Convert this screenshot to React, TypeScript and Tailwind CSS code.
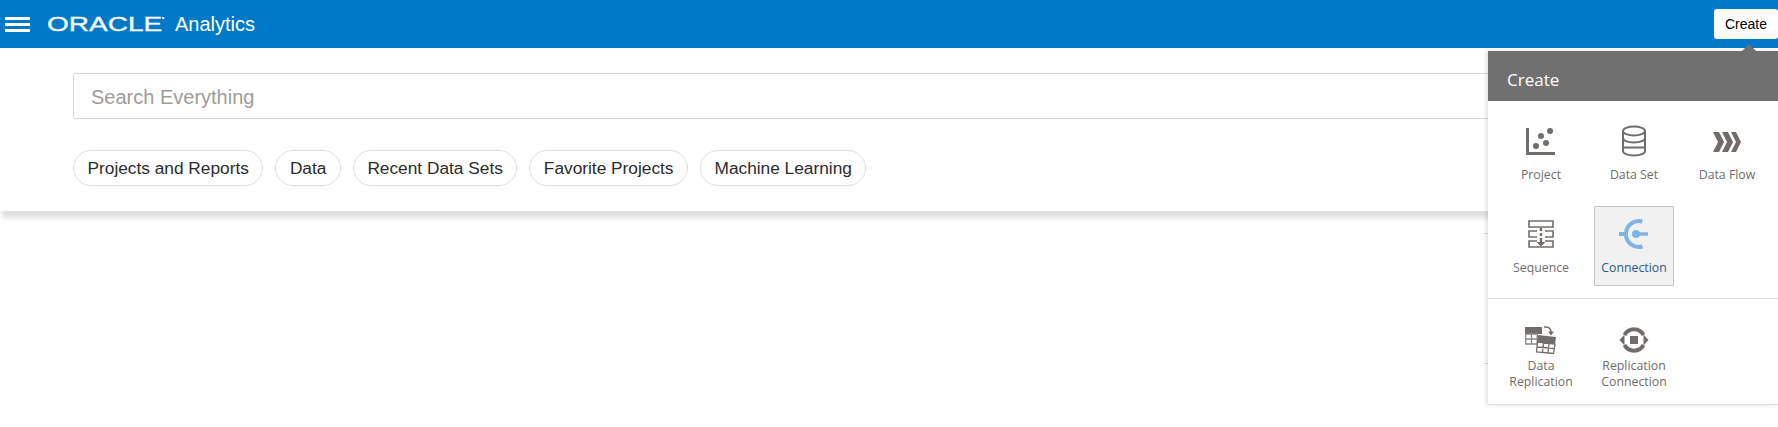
import type { ReactNode } from 'react';

const pills = ['Projects and Reports', 'Data', 'Recent Data Sets', 'Favorite Projects', 'Machine Learning'];

function ProjectIcon() {
  return (
    <svg className="w-8 h-8" viewBox="0 0 32 32" fill="#716d6b">
      <path d="M1 3h3v24h26v3H1z" />
      <circle cx="11" cy="21" r="3" />
      <circle cx="21" cy="18" r="3" />
      <circle cx="16" cy="11" r="3" />
      <circle cx="25" cy="6" r="3" />
    </svg>
  );
}

function DataSetIcon() {
  return (
    <svg className="w-8 h-8" viewBox="0 0 32 32" fill="none" stroke="#716d6b" strokeWidth="2">
      <ellipse cx="16" cy="6" rx="11" ry="4.500" />
      <path d="M5 6v20c0 2.500 4.500 4.500 11 4.500s11-2 11-4.500V6" />
      <path d="M5 13c0 2.500 4.500 4.500 11 4.500s11-2 11-4.500" />
      <path d="M5 22.500h22" />
    </svg>
  );
}

function DataFlowIcon() {
  return (
    <svg className="w-8 h-8" viewBox="0 0 32 32" fill="#716d6b">
      <path d="M2 7h6l5 10-5 10H2l5-10z" />
      <path d="M11 7h6l5 10-5 10h-6l5-10z" />
      <path d="M20 7h5l5 10-5 10h-5l5-10z" />
    </svg>
  );
}

function SequenceIcon() {
  return (
    <svg className="w-8 h-8" viewBox="0 0 32 32" fill="none" stroke="#716d6b" strokeWidth="1.600">
      <path d="M4 3h24v6H4z" />
      <path d="M12 13H4v6h8M20 13h8v6h-8" />
      <path d="M12 23H4v6h24v-6h-8" />
      <path d="M16 10v3M16 15v3M16 20v5" strokeWidth="2.400" />
      <path d="M11.500 24h9L16 28.500z" fill="#716d6b" stroke="none" />
    </svg>
  );
}

function ConnectionIcon() {
  return (
    <svg className="w-8 h-8" viewBox="0 0 32 32" fill="none" stroke="#7db4e3">
      <path d="M24.500 3.500A13 13 0 1 0 24.500 28.500" strokeWidth="4" />
      <path d="M1 16h5" strokeWidth="4" />
      <circle cx="18" cy="16" r="4" fill="#7db4e3" stroke="none" />
      <path d="M18 16h12" strokeWidth="3.400" />
    </svg>
  );
}

function DataReplicationIcon() {
  return (
    <svg className="w-8 h-8" viewBox="0 0 32 32">
      <path d="M0 3h17v7H0z" fill="#716d6b" />
      <path d="M.7 10h11.500v10H.7zM.7 15h11.500M6.500 10v10" fill="#fff" stroke="#8a8685" strokeWidth="1.300" />
      <path d="M19 3c4-.5 7 1 7 5" fill="none" stroke="#716d6b" strokeWidth="1.500" />
      <path d="M23 7.500h6L26 11.500z" fill="#716d6b" />
      <path d="M13 11l18 2-1 7-18-2z" fill="#716d6b" />
      <path d="M12.500 18l17.500 2-1.500 9.500-17-1.500zM12 23l17.500 1.500M18.500 18.500l-1 10M24 19.500l-1 9.500" fill="#fff" stroke="#716d6b" strokeWidth="1.300" />
    </svg>
  );
}

function ReplicationConnectionIcon() {
  return (
    <svg className="w-8 h-8" viewBox="0 0 32 32" fill="none" stroke="#716d6b">
      <path d="M6.500 11A10.800 10.800 0 0 1 25.500 11M25.500 21A10.800 10.800 0 0 1 6.500 21" strokeWidth="4" />
      <path d="M6.500 10.500L1.500 16l5 5.500zM25.500 10.500l5 5.500-5 5.500z" fill="#716d6b" stroke="none" />
      <rect x="12" y="12" width="8" height="8" fill="#716d6b" stroke="none" />
    </svg>
  );
}

function MenuItem({ icon, label, active, tight }: { icon: ReactNode; label: ReactNode; active?: boolean; tight?: boolean }) {
  return (
    <div
      className={`w-[80px] h-[80px] pt-[11px] flex flex-col items-center text-center border ${
        active ? 'bg-[#f1f1f1] border-[#c4c4c4] text-[#2c5a8e]' : 'border-transparent text-[#716d6b]'
      }`}
    >
      {icon}
      <div className={`text-[12.300px] leading-[16px] whitespace-nowrap ${tight ? 'mt-[2px]' : 'mt-[10px]'}`}>{label}</div>
    </div>
  );
}

export default function App() {
  return (
    <div className="relative w-full h-[427px] overflow-hidden bg-white font-['Liberation_Sans',Arial,sans-serif]">
      <header className="h-[48px] bg-[#007ac8] flex items-center justify-between text-white">
        <div className="flex items-center">
          <div className="ml-[5px] w-[25px] flex flex-col gap-[3px] pt-[1px]">
            <div className="h-[3px] bg-white" />
            <div className="h-[3px] bg-white" />
            <div className="h-[3px] bg-white" />
          </div>
          <div className="relative ml-[17px] w-[116px] text-[20px] leading-[20px] origin-left scale-x-[1.4] whitespace-nowrap [-webkit-text-stroke:0.3px_white]">
            ORACLE
            <span className="absolute left-[82px] top-[3px] w-[2px] h-[2px] rounded-full bg-white" />
          </div>
          <div className="ml-[12px] text-[20px] leading-[24px] -mt-[1px]">Analytics</div>
        </div>
        <button className="w-[64px] h-[30px] bg-white rounded-[3px] text-[14px] text-black">Create</button>
      </header>

      <section className="h-[163px] pt-[25px] pl-[73px] shadow-[0_9px_5px_-2px_rgba(0,0,0,0.13)]">
        <div className="h-[46px] flex items-center pl-[17px] pt-[1px] border border-[#d6d6d6] rounded-[2px] text-[20px] text-[#a09c9a]">
          Search Everything
        </div>
        <div className="mt-[31px] flex gap-[12px]">
          {pills.map((pill) => (
            <div
              key={pill}
              className="h-[36px] px-[13.500px] pt-[1px] flex items-center rounded-full border border-[#dfdfdf] text-[17.300px] text-[#2c2c2c] whitespace-nowrap"
            >
              {pill}
            </div>
          ))}
        </div>
      </section>

      <div className="absolute left-[1484px] top-[233px] w-[4px] h-px bg-[#d8d8d8]" />
      <div className="absolute left-[1484px] top-[363px] w-[4px] h-px bg-[#d8d8d8]" />

      <div className="absolute left-[1488px] top-[51px] w-[290px] bg-white border-b border-[#dcdcdc] shadow-[-2px_0_4px_rgba(0,0,0,0.12)] font-['Open_Sans',sans-serif]">
        <div className="absolute right-[22px] -top-[7px] w-0 h-0 border-x-[7px] border-x-transparent border-b-[7px] border-b-[#707070]" />
        <div className="h-[50px] bg-[#707070] flex items-center pl-[19px] pt-[8px] text-[17px] text-white">Create</div>
        <div className="pl-[13px] pt-[12px] pb-[12px] grid grid-cols-[repeat(3,80px)] gap-[13px]">
          <MenuItem icon={<ProjectIcon />} label="Project" />
          <MenuItem icon={<DataSetIcon />} label="Data Set" />
          <MenuItem icon={<DataFlowIcon />} label="Data Flow" />
          <MenuItem icon={<SequenceIcon />} label="Sequence" />
          <MenuItem icon={<ConnectionIcon />} label="Connection" active />
        </div>
        <div className="pl-[13px] pt-[13px] pb-[12px] border-t border-[#dcdcdc] grid grid-cols-[repeat(3,80px)] gap-[13px]">
          <MenuItem icon={<DataReplicationIcon />} label={<>Data<br />Replication</>} tight />
          <MenuItem icon={<ReplicationConnectionIcon />} label={<>Replication<br />Connection</>} tight />
        </div>
      </div>
    </div>
  );
}
